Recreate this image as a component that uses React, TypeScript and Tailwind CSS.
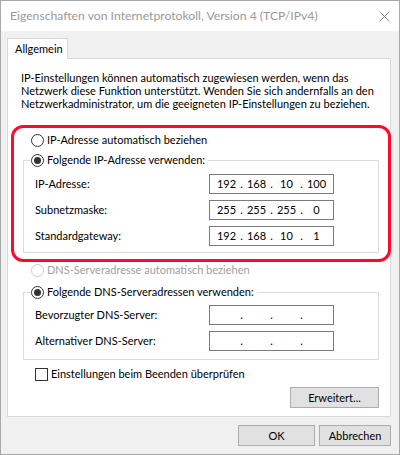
import React from "react";

function Radio({ checked, disabled }: { checked?: boolean; disabled?: boolean }) {
  return (
    <span
      className={
        disabled
          ? "inline-flex shrink-0 w-[13px] h-[13px] rounded-full border border-[#cccccc] bg-white items-center justify-center"
          : "inline-flex shrink-0 w-[13px] h-[13px] rounded-full border border-[#333333] bg-white items-center justify-center"
      }
    >
      {checked && <span className="w-[7px] h-[7px] rounded-full bg-[#333333]" />}
    </span>
  );
}

function IpBox({ parts }: { parts: string[] }) {
  return (
    <div className="w-[125px] h-[20px] border border-[#7a7a7a] bg-white flex items-center pl-[4px] text-black">
      {parts.map((p, i) => (
        <React.Fragment key={i}>
          {i > 0 && <span className="w-[5px] text-center">.</span>}
          <span className="w-[25px] text-center">{p}</span>
        </React.Fragment>
      ))}
    </div>
  );
}

function Row({ label, parts }: { label: string; parts: string[] }) {
  return (
    <div className="flex items-center h-[20px]">
      <span className="w-[174px]">{label}</span>
      <IpBox parts={parts} />
    </div>
  );
}

function Button({ children, className }: { children: React.ReactNode; className: string }) {
  return (
    <div className={"h-[21px] flex items-center justify-center bg-[#e1e1e1] border border-[#adadad] " + className}>
      {children}
    </div>
  );
}

export default function App() {
  return (
    <div className="relative w-[400px] h-[455px] border border-[#a8a8a8] bg-[#f0f0f0] font-['Lato',sans-serif] text-[11px] leading-[16px] text-black overflow-hidden whitespace-nowrap">
      {/* Title bar */}
      <div className="h-[30px] bg-white flex items-center pl-[9px] pr-[9px]">
        <span className="text-[12.2px] text-[#999999]">Eigenschaften von Internetprotokoll, Version 4 (TCP/IPv4)</span>
        <svg className="ml-auto" width="11" height="11" viewBox="0 0 11 11">
          <path d="M0.5 0.5 L10.5 10.5 M10.5 0.5 L0.5 10.5" stroke="#8c8c8c" strokeWidth="1" fill="none" />
        </svg>
      </div>

      {/* Body */}
      <div className="pt-[7px] pl-[6px] flex flex-col">
        <div className="relative z-10 w-[61px] h-[21px] -mb-px border-l border-t border-r border-[#d9d9d9] bg-white flex items-center pl-[7px]">
          Allgemein
        </div>
        <div className="w-[384px] h-[359px] border border-[#d9d9d9] bg-white flex flex-col">
          <p className="ml-[13px] mt-[12px] leading-[13px]">
            IP-Einstellungen können automatisch zugewiesen werden, wenn das
            <br />
            Netzwerk diese Funktion unterstützt. Wenden Sie sich andernfalls an den
            <br />
            Netzwerkadministrator, um die geeigneten IP-Einstellungen zu beziehen.
          </p>

          <div className="ml-[23px] mt-[22px] h-[16px] flex items-center">
            <Radio />
            <span className="ml-[3px]">IP-Adresse automatisch beziehen</span>
          </div>

          <fieldset className="ml-[15px] mt-[4px] w-[356px] border border-[#dcdcdc] p-0 m-0">
            <legend className="ml-[7px] pr-[3px] p-0">
              <span className="h-[16px] flex items-center">
                <Radio checked />
                <span className="ml-[3px]">Folgende IP-Adresse verwenden:</span>
              </span>
            </legend>
            <div className="pl-[11px] pt-[6px] pb-[6px] flex flex-col gap-[6px]">
              <Row label="IP-Adresse:" parts={["192", "168", "10", "100"]} />
              <Row label="Subnetzmaske:" parts={["255", "255", "255", "0"]} />
              <Row label="Standardgateway:" parts={["192", "168", "10", "1"]} />
            </div>
          </fieldset>

          <div className="ml-[23px] mt-[9px] h-[16px] flex items-center">
            <Radio disabled />
            <span className="ml-[3px] text-[#a0a0a0]">DNS-Serveradresse automatisch beziehen</span>
          </div>

          <fieldset className="ml-[15px] mt-[6px] w-[356px] border border-[#dcdcdc] p-0 m-0">
            <legend className="ml-[7px] pr-[3px] p-0">
              <span className="h-[16px] flex items-center">
                <Radio checked />
                <span className="ml-[3px]">Folgende DNS-Serveradressen verwenden:</span>
              </span>
            </legend>
            <div className="pl-[11px] pt-[5px] pb-[8px] flex flex-col gap-[6px]">
              <Row label="Bevorzugter DNS-Server:" parts={["", "", "", ""]} />
              <Row label="Alternativer DNS-Server:" parts={["", "", "", ""]} />
            </div>
          </fieldset>

          <div className="ml-[27px] mt-[6px] h-[16px] flex items-center">
            <span className="w-[13px] h-[13px] border border-[#333333] bg-white shrink-0" />
            <span className="ml-[3px]">Einstellungen beim Beenden überprüfen</span>
          </div>

          <div className="mt-[5px] mr-[11px] self-end">
            <Button className="w-[89px] h-[20px]">Erweitert...</Button>
          </div>
        </div>

        <div className="mt-[8px] flex gap-[4px] pl-[231px]">
          <Button className="w-[77px]">OK</Button>
          <Button className="w-[72px]">Abbrechen</Button>
        </div>
      </div>

      {/* Red highlight annotation */}
      <div className="absolute left-[10px] top-[124px] w-[380px] h-[137px] border-[3px] border-[#ff0a2d] rounded-[12px] pointer-events-none" />
    </div>
  );
}
